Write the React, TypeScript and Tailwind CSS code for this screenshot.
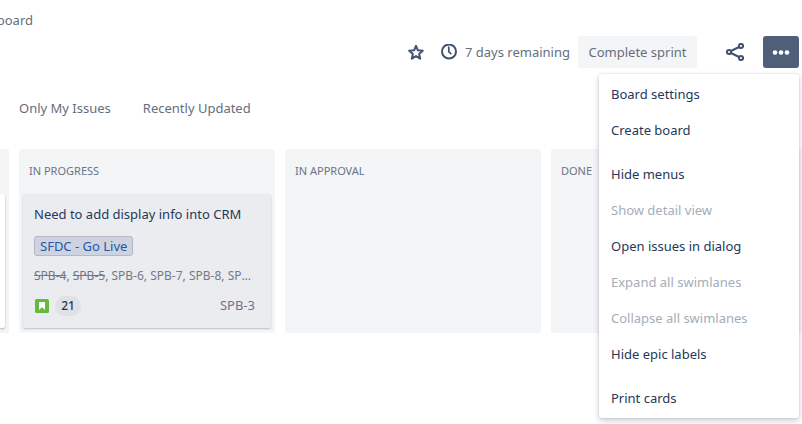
import { useState } from 'react';

interface MenuItem {
  label: string;
  disabled?: boolean;
}

const MENU_GROUPS: MenuItem[][] = [
  [{ label: 'Board settings' }, { label: 'Create board' }],
  [
    { label: 'Hide menus' },
    { label: 'Show detail view', disabled: true },
    { label: 'Open issues in dialog' },
    { label: 'Expand all swimlanes', disabled: true },
    { label: 'Collapse all swimlanes', disabled: true },
    { label: 'Hide epic labels' },
  ],
  [{ label: 'Print cards' }],
];

const LINKED_ISSUES = [
  { key: 'SPB-4', done: true },
  { key: 'SPB-5', done: true },
  { key: 'SPB-6', done: false },
  { key: 'SPB-7', done: false },
  { key: 'SPB-8', done: false },
  { key: 'SPB-10', done: false },
];

function StarIcon() {
  return (
    <svg className="w-4 h-4" viewBox="0 0 16 16" fill="none" stroke="currentColor" strokeWidth={2} strokeLinejoin="round">
      <path d="M8 1.8l1.9 4.5 4.9.4-3.7 3.2 1.1 4.8L8 12.1l-4.2 2.6 1.1-4.8L1.2 6.7l4.9-.4z" />
    </svg>
  );
}

function ClockIcon() {
  return (
    <svg className="w-4 h-4" viewBox="0 0 16 16" fill="none" stroke="currentColor" strokeWidth={2} strokeLinecap="round" strokeLinejoin="round">
      <circle cx="8" cy="7.5" r="7" />
      <path d="M7.8 3.2v4.5l2 2" strokeWidth={1.7} />
    </svg>
  );
}

function ShareIcon() {
  return (
    <svg className="w-[18px] h-[18px]" viewBox="0 0 18 18" fill="none" stroke="currentColor" strokeWidth={2}>
      <circle cx="3" cy="9" r="2.1" />
      <circle cx="15" cy="3" r="2.1" />
      <circle cx="15" cy="15" r="2.1" />
      <path d="M5 8l8-4M5 10l8 4" />
    </svg>
  );
}

function MoreIcon() {
  return (
    <svg className="w-[18px] h-1.5" viewBox="0 0 18 6" fill="currentColor">
      <circle cx="3" cy="3.5" r="2.3" />
      <circle cx="9" cy="3.5" r="2.3" />
      <circle cx="15" cy="3.5" r="2.3" />
    </svg>
  );
}

function StoryIcon() {
  return (
    <svg className="w-3.5 h-3.5" viewBox="0 0 14 14" role="img" aria-label="Story">
      <rect width="14" height="14" rx="1.5" fill="#63ba3c" />
      <path d="M4 3.5a.5.5 0 01.5-.5h5a.5.5 0 01.5.5V11L7 8.3 4 11z" fill="#fff" />
    </svg>
  );
}

function BoardMenu() {
  return (
    <div
      role="menu"
      className="absolute top-full right-0 mt-1.5 z-10 w-[200px] py-0.5 flex flex-col gap-2 bg-white rounded-[3px] shadow-[0_3px_6px_rgba(9,30,66,0.2),0_0_2px_rgba(9,30,66,0.2)]"
    >
      {MENU_GROUPS.map((group) => (
        <div key={group[0].label} role="group">
          {group.map((item) => (
            <button
              key={item.label}
              role="menuitem"
              disabled={item.disabled}
              className="block w-full h-9 pt-0.5 px-3 text-left text-[#253858] disabled:text-[#a5adba]"
            >
              {item.label}
            </button>
          ))}
        </div>
      ))}
    </div>
  );
}

function IssueCard() {
  return (
    <article className="mx-1 h-[134px] pl-[11px] pr-3 pt-2.5 bg-[#ebecf0] rounded-xs shadow-[0_1px_2px_rgba(9,30,66,0.25)]">
      <h3 className="leading-5 whitespace-nowrap text-[#253858]">Need to add display info into CRM</h3>
      <a href="#epic" className="mt-3 block w-fit h-5 px-[5px] leading-[18px] rounded-[3px] border border-[#b3b9c9] bg-[#cfd3df] text-[#2255ad]">
        SFDC - Go Live
      </a>
      <p className="mt-2.5 mr-1 text-xs leading-5 truncate text-[#737a87]">
        {LINKED_ISSUES.map((issue, i) => (
          <span key={issue.key}>
            {i > 0 && ', '}
            {issue.done ? <s>{issue.key}</s> : issue.key}
          </span>
        ))}
      </p>
      <div className="mt-2.5 px-px flex items-center">
        <StoryIcon />
        <span className="ml-1.5 w-[26px] h-5 leading-5 rounded-full text-center text-xs font-medium bg-[#dfe1e6] text-[#253858]">21</span>
        <a href="#SPB-3" className="ml-auto mr-[3px] text-[#6b7483]">SPB-3</a>
      </div>
    </article>
  );
}

function Column({ title, children }: { title: string; children?: React.ReactNode }) {
  return (
    <section className="w-64 shrink-0 h-[184px] bg-[#f4f5f7] rounded-xs">
      <h2 className="h-[45px] px-2.5 leading-[43px] text-[11px] text-[#6b7483]">{title}</h2>
      {children}
    </section>
  );
}

export default function App() {
  const [menuOpen, setMenuOpen] = useState(true);

  return (
    <div className="min-h-screen overflow-hidden bg-white font-['Noto_Sans','Open_Sans',sans-serif] text-[13px] text-[#656e7d]">
      {/* Breadcrumb, scrolled partly out of view */}
      <nav className="w-[33px] h-9 pt-2.5 flex justify-end overflow-hidden leading-5">
        <a href="#board">board</a>
      </nav>

      <header className="h-8 pr-[3px] flex items-center justify-end">
        <button aria-label="Star board" className="text-[#42526e]">
          <StarIcon />
        </button>
        <div className="ml-[17px] mr-2 flex items-center gap-2">
          <span className="text-[#42526e]">
            <ClockIcon />
          </span>
          <span className="w-[105px] pt-0.5 whitespace-nowrap">7 days remaining</span>
        </div>
        <button className="w-[119px] h-8 pt-0.5 rounded-[3px] whitespace-nowrap bg-[#f4f5f7]">Complete sprint</button>
        <button aria-label="Share" className="ml-5 w-9 h-8 flex items-center justify-center text-[#42526e]">
          <ShareIcon />
        </button>
        <div className="relative ml-2.5">
          <button
            aria-label="More"
            aria-expanded={menuOpen}
            onClick={() => setMenuOpen(!menuOpen)}
            className="w-9 h-8 flex items-center justify-center rounded-[3px] bg-[#505f79] text-white"
          >
            <MoreIcon />
          </button>
          {menuOpen && <BoardMenu />}
        </div>
      </header>

      <div className="mt-[30px] ml-[19px] flex gap-8 leading-5">
        <button>Only My Issues</button>
        <button>Recently Updated</button>
      </div>

      <main className="mt-[31px] flex gap-2.5">
        {/* Trailing edge of the previous column */}
        <div className="w-[9px] shrink-0 h-[184px] pt-[45px] pr-1 bg-[#f4f5f7] rounded-r-xs">
          <div className="h-[134px] bg-white rounded-r-xs shadow-[0_1px_2px_rgba(9,30,66,0.3)]" />
        </div>
        <Column title="IN PROGRESS">
          <IssueCard />
        </Column>
        <Column title="IN APPROVAL" />
        <Column title="DONE" />
      </main>
    </div>
  );
}
